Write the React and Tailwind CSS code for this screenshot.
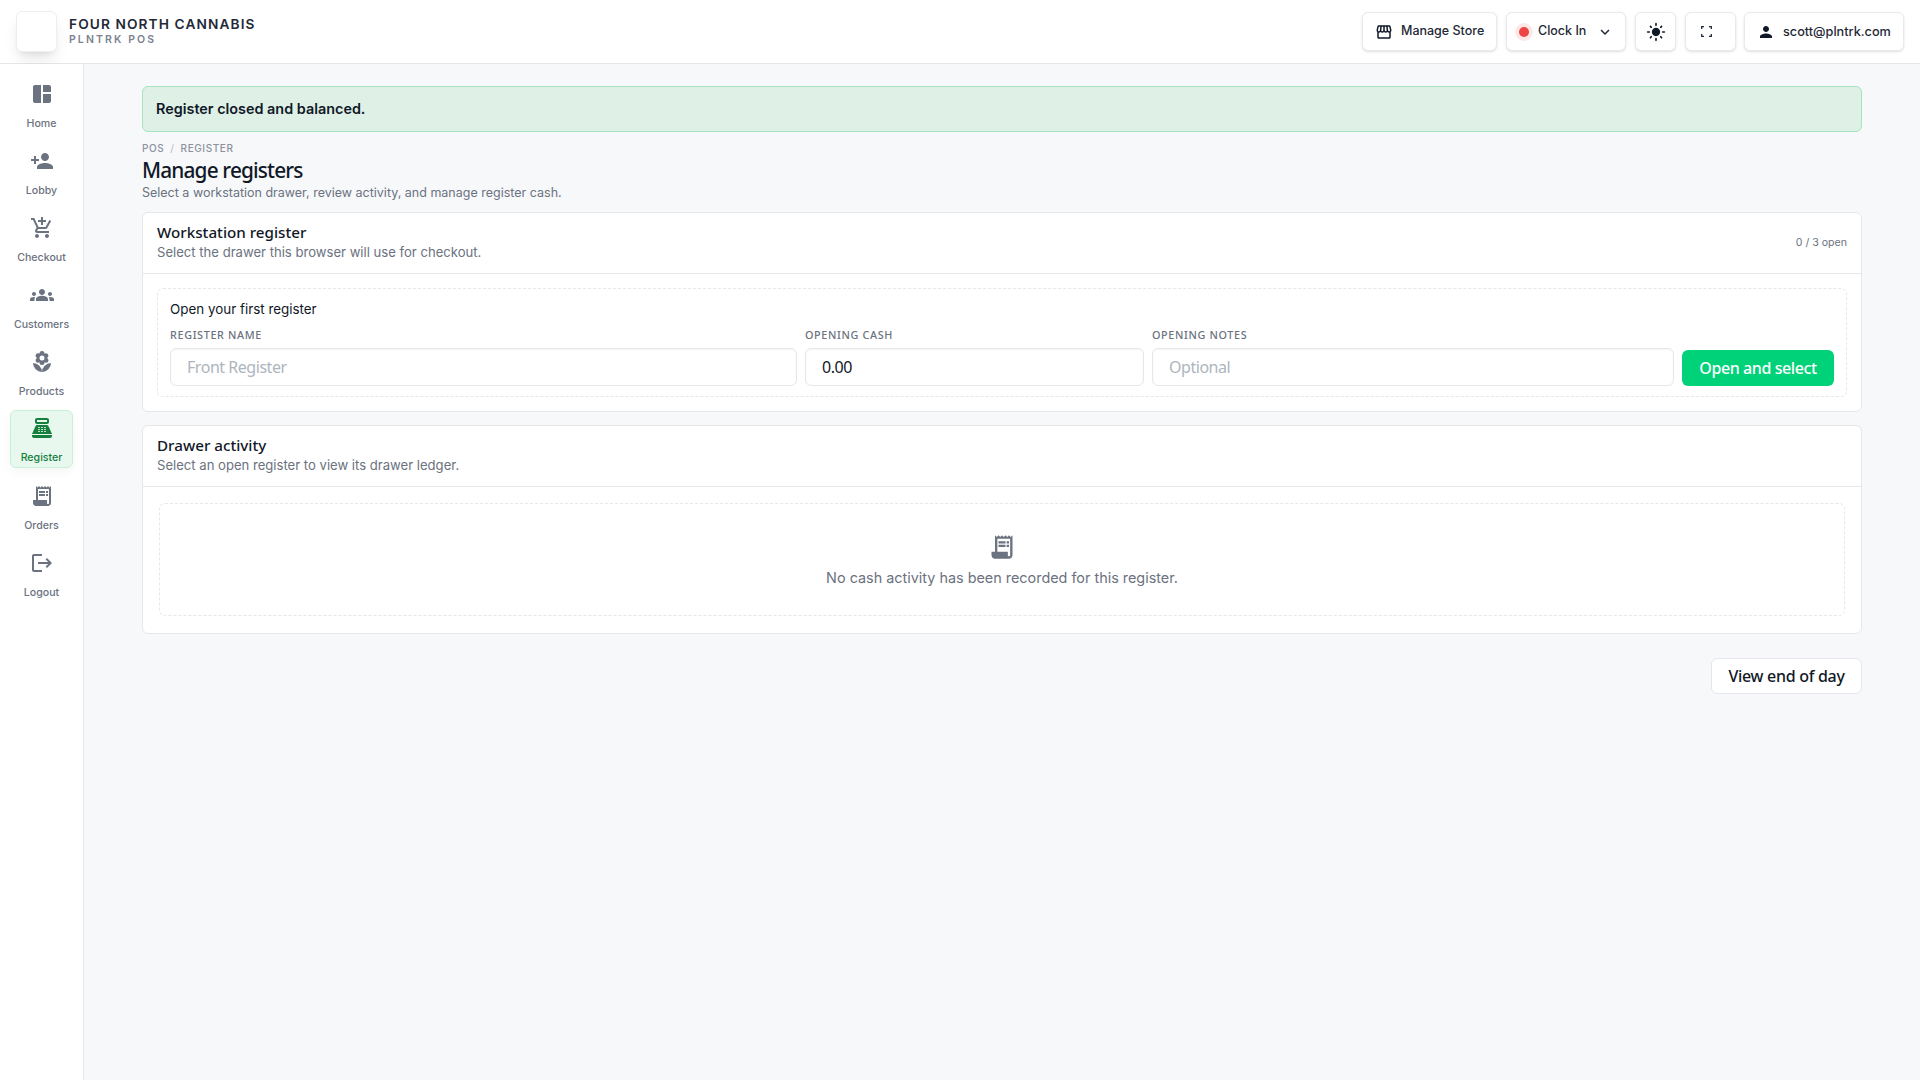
import {
  MdAddShoppingCart,
  MdExpandMore,
  MdGroups,
  MdLightMode,
  MdLocalFlorist,
  MdLogout,
  MdPerson,
  MdPersonAdd,
  MdPointOfSale,
  MdReceiptLong,
  MdSpaceDashboard,
  MdStorefront,
} from 'react-icons/md'

const navItems = [
  { label: 'Home', icon: MdSpaceDashboard },
  { label: 'Lobby', icon: MdPersonAdd },
  { label: 'Checkout', icon: MdAddShoppingCart },
  { label: 'Customers', icon: MdGroups },
  { label: 'Products', icon: MdLocalFlorist },
  { label: 'Register', icon: MdPointOfSale, active: true },
  { label: 'Orders', icon: MdReceiptLong },
  { label: 'Logout', icon: MdLogout },
]

function FullscreenIcon() {
  return (
    <svg width="11" height="11" viewBox="0 0 11 11" fill="none" stroke="#1f2937" strokeWidth="1.3">
      <path d="M.7 3V.7H3M8 .7h2.3V3M10.3 8v2.3H8M3 10.3H.7V8" />
    </svg>
  )
}

function TopButton({ className = '', children }) {
  return (
    <button className={`flex h-[39px] items-center rounded-md border border-[#e8eaed] bg-white text-[12.5px] font-medium text-[#1f2937] shadow-sm ${className}`}>
      {children}
    </button>
  )
}

function Field({ label, placeholder, value }) {
  return (
    <div className="flex flex-col">
      <label className="mb-[6px] text-[10.8px] leading-[14px] font-medium tracking-[0.06em] text-[#6b7280] uppercase font-['Noto_Sans',sans-serif]">
        {label}
      </label>
      <input
        readOnly
        value={value}
        placeholder={placeholder}
        className="h-[38px] w-full rounded-md border border-[#e5e7eb] bg-white px-4 text-[16px] tracking-[-0.029em] text-[#111827] font-['Noto_Sans',sans-serif] placeholder:text-[#adb5bd] shadow-[inset_0_1px_2px_rgba(0,0,0,0.04)] outline-none"
      />
    </div>
  )
}

function CardHeading({ title, subtitle }) {
  return (
    <div>
      <h2 className="text-[15.2px] leading-[21px] font-medium text-[#111827] font-['Noto_Sans',sans-serif]">{title}</h2>
      <p className="mt-[1px] text-[13.1px] leading-[17px] text-[#6b7280]">{subtitle}</p>
    </div>
  )
}

export default function App() {
  return (
    <div className="flex min-h-screen flex-col bg-[#f7f8fa] font-['Inter',sans-serif]">
      {/* Top bar */}
      <header className="flex h-[64px] items-center justify-between border-b border-[#e5e7eb] bg-white px-4">
        <div className="flex items-center gap-[12px]">
          <div className="h-[41px] w-[41px] rounded-md border border-[#eceef1] bg-white shadow-lg" />
          <div className="-mt-[1px]">
            <div className="text-[13.7px] leading-[16px] font-semibold tracking-[0.08em] text-[#1f2937]">FOUR NORTH CANNABIS</div>
            <div className="text-[10.5px] leading-[15px] font-semibold tracking-[0.2em] text-[#7b8290]">PLNTRK POS</div>
          </div>
        </div>
        <div className="flex items-center gap-[9px]">
          <TopButton className="w-[135px] gap-[8px] pl-[12px]">
            <MdStorefront size={18} className="text-[#111827]" />
            Manage Store
          </TopButton>
          <TopButton className="w-[120px] pl-[8px]">
            <span className="flex h-[18px] w-[18px] items-center justify-center rounded-full bg-[#fde8e8]">
              <span className="h-[10px] w-[10px] rounded-full bg-[#ef4444]" />
            </span>
            <span className="ml-[5px]">Clock In</span>
            <MdExpandMore size={18} className="ml-[10px]" />
          </TopButton>
          <TopButton className="w-[41px] justify-center">
            <MdLightMode size={20} className="text-[#111827]" />
          </TopButton>
          <TopButton className="w-[51px] justify-center pr-2">
            <FullscreenIcon />
          </TopButton>
          <TopButton className="-ml-px w-[160px] gap-[8px] pl-[12px] text-[12.7px]">
            <MdPerson size={18} className="text-[#111827]" />
            scott@plntrk.com
          </TopButton>
        </div>
      </header>

      <div className="flex flex-1">
        {/* Side nav */}
        <nav className="flex w-[84px] shrink-0 flex-col items-center gap-[9px] border-r border-[#e5e7eb] bg-white pt-[11px]">
          {navItems.map((item) => {
            const Icon = item.icon
            return (
              <div
                key={item.label}
                className={`flex h-[58px] w-[63px] flex-col items-center justify-between rounded-md border ${
                  item.active
                    ? 'border-[#c6f0d8] bg-[#e9f8ef] pt-[5px] pb-[2px] text-[#15803d] shadow-[0_4px_12px_rgba(0,0,0,0.04)]'
                    : 'border-transparent pt-[6px] pb-[1px] text-[#6b7280]'
                }`}
              >
                <Icon size={24} />
                <span className="text-[10.6px] leading-[14px] font-medium">{item.label}</span>
              </div>
            )
          })}
        </nav>

        {/* Main content */}
        <main className="flex-1 px-[58px] pt-[22px]">
          <div className="flex h-[46px] items-center rounded-md border border-[#a7e3c0] bg-[#dff1e7] px-[13px] text-[14.4px] font-semibold text-[#111827]">
            Register closed and balanced.
          </div>

          <div className="mt-[9px] flex gap-[6px] text-[10px] leading-[15px] font-medium tracking-[0.06em] text-[#8b929c]">
            <span>POS</span>
            <span className="font-normal text-[#b3b8c0]">/</span>
            <span>REGISTER</span>
          </div>
          <h1 className="text-[20.8px] leading-[28px] font-medium tracking-[-0.04em] text-[#111827] font-['Noto_Sans',sans-serif]">Manage registers</h1>
          <p className="text-[12.5px] leading-[17px] text-[#6b7280]">Select a workstation drawer, review activity, and manage register cash.</p>

          <section className="mt-[11px] rounded-md border border-[#e5e7eb] bg-white">
            <div className="flex h-[61px] items-start justify-between border-b border-[#e5e7eb] px-[14px] pt-[9px]">
              <CardHeading title="Workstation register" subtitle="Select the drawer this browser will use for checkout." />
              <span className="self-center pb-[9px] text-[10.6px] text-[#6b7280]">0 / 3 open</span>
            </div>
            <div className="p-[14px]">
              <div className="rounded-md border border-dashed border-[#e5e7eb] px-[12px] pt-[11px] pb-[10px]">
                <div className="mb-[10px] text-[13.4px] leading-[18px] text-[#111827]">Open your first register</div>
                <div className="grid grid-cols-[627px_339px_522px_152px] items-end gap-[8px]">
                  <Field label="Register name" placeholder="Front Register" value="" />
                  <Field label="Opening cash" placeholder="" value="0.00" />
                  <Field label="Opening notes" placeholder="Optional" value="" />
                  <button className="h-[36px] rounded-md bg-[#00d27a] text-[16px] tracking-[-0.026em] font-medium text-white font-['Noto_Sans',sans-serif]">
                    Open and select
                  </button>
                </div>
              </div>
            </div>
          </section>

          <section className="mt-[13px] rounded-md border border-[#e5e7eb] bg-white">
            <div className="h-[61px] border-b border-[#e5e7eb] px-[14px] pt-[9px]">
              <CardHeading title="Drawer activity" subtitle="Select an open register to view its drawer ledger." />
            </div>
            <div className="px-[16px] pt-[16px] pb-[17px]">
              <div className="flex h-[113px] flex-col items-center justify-center rounded-md border border-dashed border-[#e5e7eb] pt-[1px]">
                <MdReceiptLong size={28} className="text-[#6b7280]" />
                <p className="mt-[7px] text-[14.4px] leading-[20px] text-[#6b7280]">No cash activity has been recorded for this register.</p>
              </div>
            </div>
          </section>

          <div className="mt-[24px] flex justify-end">
            <button className="h-[36px] w-[151px] rounded-md border border-[#e5e7eb] bg-white text-[16px] tracking-[-0.018em] font-medium text-[#111827] font-['Noto_Sans',sans-serif]">
              View end of day
            </button>
          </div>
        </main>
      </div>
    </div>
  )
}
